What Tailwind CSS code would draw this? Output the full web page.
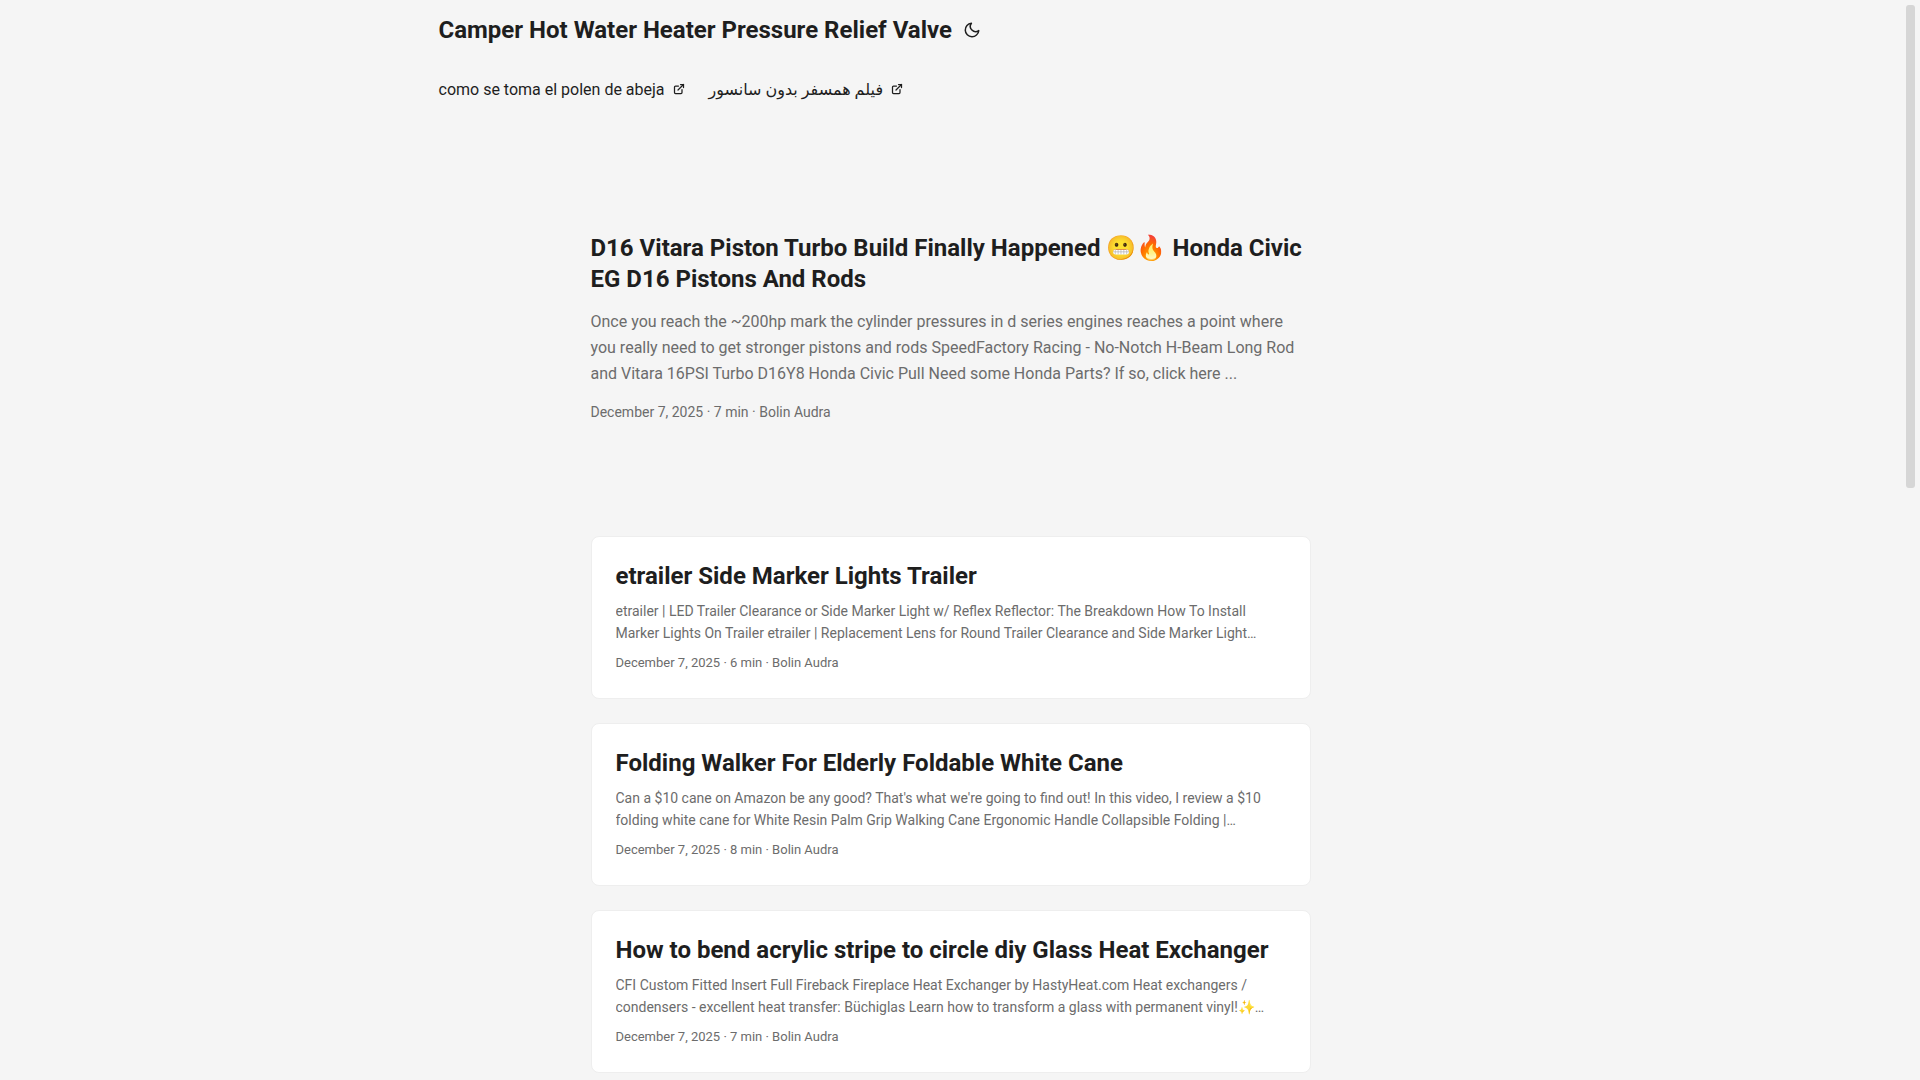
<!DOCTYPE html>
<html lang="en">
<head>
    <meta charset="UTF-8">
    <meta name="viewport" content="width=device-width, initial-scale=1.0">
    <title>Camper Hot Water Heater Pressure Relief Valve</title>
    <script src="https://cdn.jsdelivr.net/npm/@tailwindcss/browser@4"></script>
</head>
<body class="bg-[#f5f5f5] text-[#1e1e1e] font-[Roboto,'DejaVu_Sans',sans-serif] pr-[19px]">

    <!-- Header -->
    <header class="max-w-[1072px] mx-auto px-6">
        <div class="flex items-center h-[60px]">
            <a href="#" class="text-2xl font-bold">Camper Hot Water Heater Pressure Relief Valve</a>
            <button type="button" aria-label="Toggle theme" class="ml-[11px]">
                <svg class="block" width="18" height="18" viewBox="0 0 24 24" fill="none" stroke="currentColor" stroke-width="2" stroke-linecap="round" stroke-linejoin="round">
                    <path d="M21 12.79A9 9 0 1 1 11.21 3 7 7 0 0 0 21 12.79z"></path>
                </svg>
            </button>
        </div>
        <nav>
            <ul class="flex gap-6 text-base leading-[60px]">
                <li>
                    <a href="#" class="block">como se toma el polen de abeja&nbsp;
                        <svg class="inline-block align-baseline" width="12" height="12" viewBox="0 0 24 24" fill="none" stroke="currentColor" stroke-width="2.5" stroke-linecap="round" stroke-linejoin="round">
                            <path d="M18 13v6a2 2 0 01-2 2H5a2 2 0 01-2-2V8a2 2 0 012-2h6"></path>
                            <path d="M15 3h6v6"></path>
                            <path d="M10 14L21 3"></path>
                        </svg>
                    </a>
                </li>
                <li>
                    <a href="#" class="block">فیلم همسفر بدون سانسور&nbsp;
                        <svg class="inline-block align-baseline" width="12" height="12" viewBox="0 0 24 24" fill="none" stroke="currentColor" stroke-width="2.5" stroke-linecap="round" stroke-linejoin="round">
                            <path d="M18 13v6a2 2 0 01-2 2H5a2 2 0 01-2-2V8a2 2 0 012-2h6"></path>
                            <path d="M15 3h6v6"></path>
                            <path d="M10 14L21 3"></path>
                        </svg>
                    </a>
                </li>
            </ul>
        </nav>
    </header>

    <main class="max-w-[768px] mx-auto px-6 pt-6">

        <!-- First entry -->
        <article class="flex flex-col justify-center min-h-80 mt-6 mb-12">
            <h1 class="text-2xl leading-[31px] font-bold">D16 Vitara Piston Turbo Build Finally Happened 😬🔥 Honda Civic EG D16 Pistons And Rods</h1>
            <p class="my-3.5 text-base leading-[26px] text-[#6c6c6c]">Once you reach the ~200hp mark the cylinder pressures in d series engines reaches a point where you really need to get stronger pistons and rods SpeedFactory Racing - No-Notch H-Beam Long Rod and Vitara 16PSI Turbo D16Y8 Honda Civic Pull Need some Honda Parts? If so, click here ...</p>
            <footer class="text-sm leading-[22px] text-[#6c6c6c]">December 7, 2025 · 7 min · Bolin Audra</footer>
        </article>

        <!-- Posts -->
        <div class="flex flex-col gap-6">
            <article class="bg-white border border-[#eee] rounded-lg p-6">
                <h2 class="text-2xl leading-[31px] font-bold">etrailer Side Marker Lights Trailer</h2>
                <p class="my-2 text-sm leading-[22px] text-[#6c6c6c] line-clamp-2">etrailer | LED Trailer Clearance or Side Marker Light w/ Reflex Reflector: The Breakdown How To Install Marker Lights On Trailer etrailer | Replacement Lens for Round Trailer Clearance and Side Marker Light…</p>
                <footer class="text-[13px] leading-[22px] text-[#6c6c6c]">December 7, 2025 · 6 min · Bolin Audra</footer>
            </article>
            <article class="bg-white border border-[#eee] rounded-lg p-6">
                <h2 class="text-2xl leading-[31px] font-bold">Folding Walker For Elderly Foldable White Cane</h2>
                <p class="my-2 text-sm leading-[22px] text-[#6c6c6c] line-clamp-2">Can a $10 cane on Amazon be any good? That's what we're going to find out! In this video, I review a $10 folding white cane for White Resin Palm Grip Walking Cane Ergonomic Handle Collapsible Folding |…</p>
                <footer class="text-[13px] leading-[22px] text-[#6c6c6c]">December 7, 2025 · 8 min · Bolin Audra</footer>
            </article>
            <article class="bg-white border border-[#eee] rounded-lg p-6">
                <h2 class="text-2xl leading-[31px] font-bold">How to bend acrylic stripe to circle diy Glass Heat Exchanger</h2>
                <p class="my-2 text-sm leading-[22px] text-[#6c6c6c] line-clamp-2">CFI Custom Fitted Insert Full Fireback Fireplace Heat Exchanger by HastyHeat.com Heat exchangers / condensers - excellent heat transfer: Büchiglas Learn how to transform a glass with permanent vinyl!✨…</p>
                <footer class="text-[13px] leading-[22px] text-[#6c6c6c]">December 7, 2025 · 7 min · Bolin Audra</footer>
            </article>
        </div>
    </main>

    <!-- Scrollbar thumb -->
    <div class="fixed top-[5px] right-[5px] w-[9px] h-[483px] rounded-[3px] bg-[#d6d6d6]"></div>

</body>
</html>
